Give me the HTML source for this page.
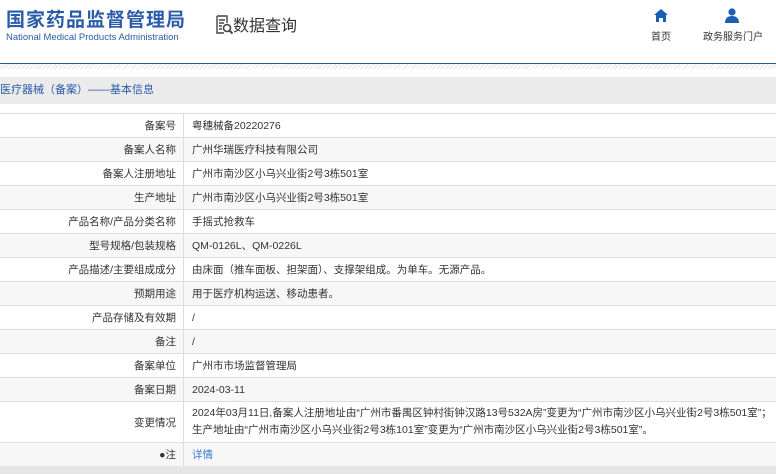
<!DOCTYPE html>
<html><head><meta charset="utf-8"><style>
body{margin:0;width:776px;height:474px;overflow:hidden;background:#fff;font-family:"Liberation Sans","Noto Sans CJK SC",sans-serif;color:#333;position:relative}
.t1{position:absolute;left:6px;top:5px;font-size:19px;font-weight:bold;color:#2a5ca8;letter-spacing:1px}
.t2{position:absolute;left:6px;top:32px;font-size:9.5px;color:#2a5ca8}
.dq{position:absolute;left:215px;top:12px;font-size:16px;color:#333}
.nav{position:absolute;top:28px;font-size:10px;color:#333}
.line{position:absolute;left:0;top:63px;width:776px;height:1px;background:#2a5c8a}
.hatch{position:absolute;left:0;top:64px;width:776px;height:5px;background:repeating-linear-gradient(135deg,#dde6ee 0 1px,#fff 1px 3px)}
.bar{position:absolute;left:0;top:77px;width:776px;height:27px;background:#ebebeb;font-size:11px;color:#2a5ca8;line-height:27px}
table{position:absolute;left:0;top:113px;width:776px;border-collapse:collapse;font-size:10.5px}
td{border-top:1px solid #ddd;border-bottom:1px solid #ddd;height:23px;padding:0}
td.l{width:176px;text-align:right;padding-right:7px;border-right:1px solid #ddd}
td.v{padding-left:8px}
tr:nth-child(even){background:#f7f7f7}
.foot{position:absolute;left:0;top:466px;width:776px;height:8px;background:#e5e5e5}
</style></head><body>
<div class="t1">国家药品监督管理局</div>
<div class="t2">National Medical Products Administration</div>
<div class="dq"><svg width="18" height="20" viewBox="0 0 18 20" style="vertical-align:-4px"><path d="M2 1h10v7M2 1v17h7M4 5h6M4 8h5M4 11h3M4 14h3" stroke="#444" stroke-width="1.4" fill="none"/><circle cx="12" cy="13" r="3.5" stroke="#444" stroke-width="1.6" fill="none"/><path d="M14.5 15.5l3 3" stroke="#444" stroke-width="2"/></svg>数据查询</div>
<svg style="position:absolute;left:654px;top:9px" width="14" height="13" viewBox="0 0 14 13"><path d="M7 0L0 6h2v7h3V9h4v4h3V6h2z" fill="#1a5fb4"/></svg>
<div class="nav" style="left:651px">首页</div>
<svg style="position:absolute;left:724px;top:8px" width="16" height="15" viewBox="0 0 16 15"><circle cx="8" cy="4" r="3.6" fill="#1a5fb4"/><path d="M1 15c0-5 3-7 7-7s7 2 7 7z" fill="#1a5fb4"/></svg>
<div class="nav" style="left:703px">政务服务门户</div>
<div class="line"></div><div class="hatch"></div>
<div class="bar">医疗器械（备案）——基本信息</div>
<table>
<tr><td class="l">备案号</td><td class="v">粤穗械备20220276</td></tr>
<tr><td class="l">备案人名称</td><td class="v">广州华瑞医疗科技有限公司</td></tr>
<tr><td class="l">备案人注册地址</td><td class="v">广州市南沙区小乌兴业街2号3栋501室</td></tr>
<tr><td class="l">生产地址</td><td class="v">广州市南沙区小乌兴业街2号3栋501室</td></tr>
<tr><td class="l">产品名称/产品分类名称</td><td class="v">手摇式抢救车</td></tr>
<tr><td class="l">型号规格/包装规格</td><td class="v">QM-0126L、QM-0226L</td></tr>
<tr><td class="l">产品描述/主要组成成分</td><td class="v">由床面（推车面板、担架面）、支撑架组成。为单车。无源产品。</td></tr>
<tr><td class="l">预期用途</td><td class="v">用于医疗机构运送、移动患者。</td></tr>
<tr><td class="l">产品存储及有效期</td><td class="v">/</td></tr>
<tr><td class="l">备注</td><td class="v">/</td></tr>
<tr><td class="l">备案单位</td><td class="v">广州市市场监督管理局</td></tr>
<tr><td class="l">备案日期</td><td class="v">2024-03-11</td></tr>
<tr><td class="l" style="height:40px">变更情况</td><td class="v" style="line-height:17px">2024年03月11日,备案人注册地址由“广州市番禺区钟村街钟汉路13号532A房”变更为“广州市南沙区小乌兴业街2号3栋501室”；<br>生产地址由“广州市南沙区小乌兴业街2号3栋101室”变更为“广州市南沙区小乌兴业街2号3栋501室”。</td></tr>
<tr><td class="l">●注</td><td class="v" style="color:#3a7bd5">详情</td></tr>
</table>
<div class="foot"></div>
</body></html>
